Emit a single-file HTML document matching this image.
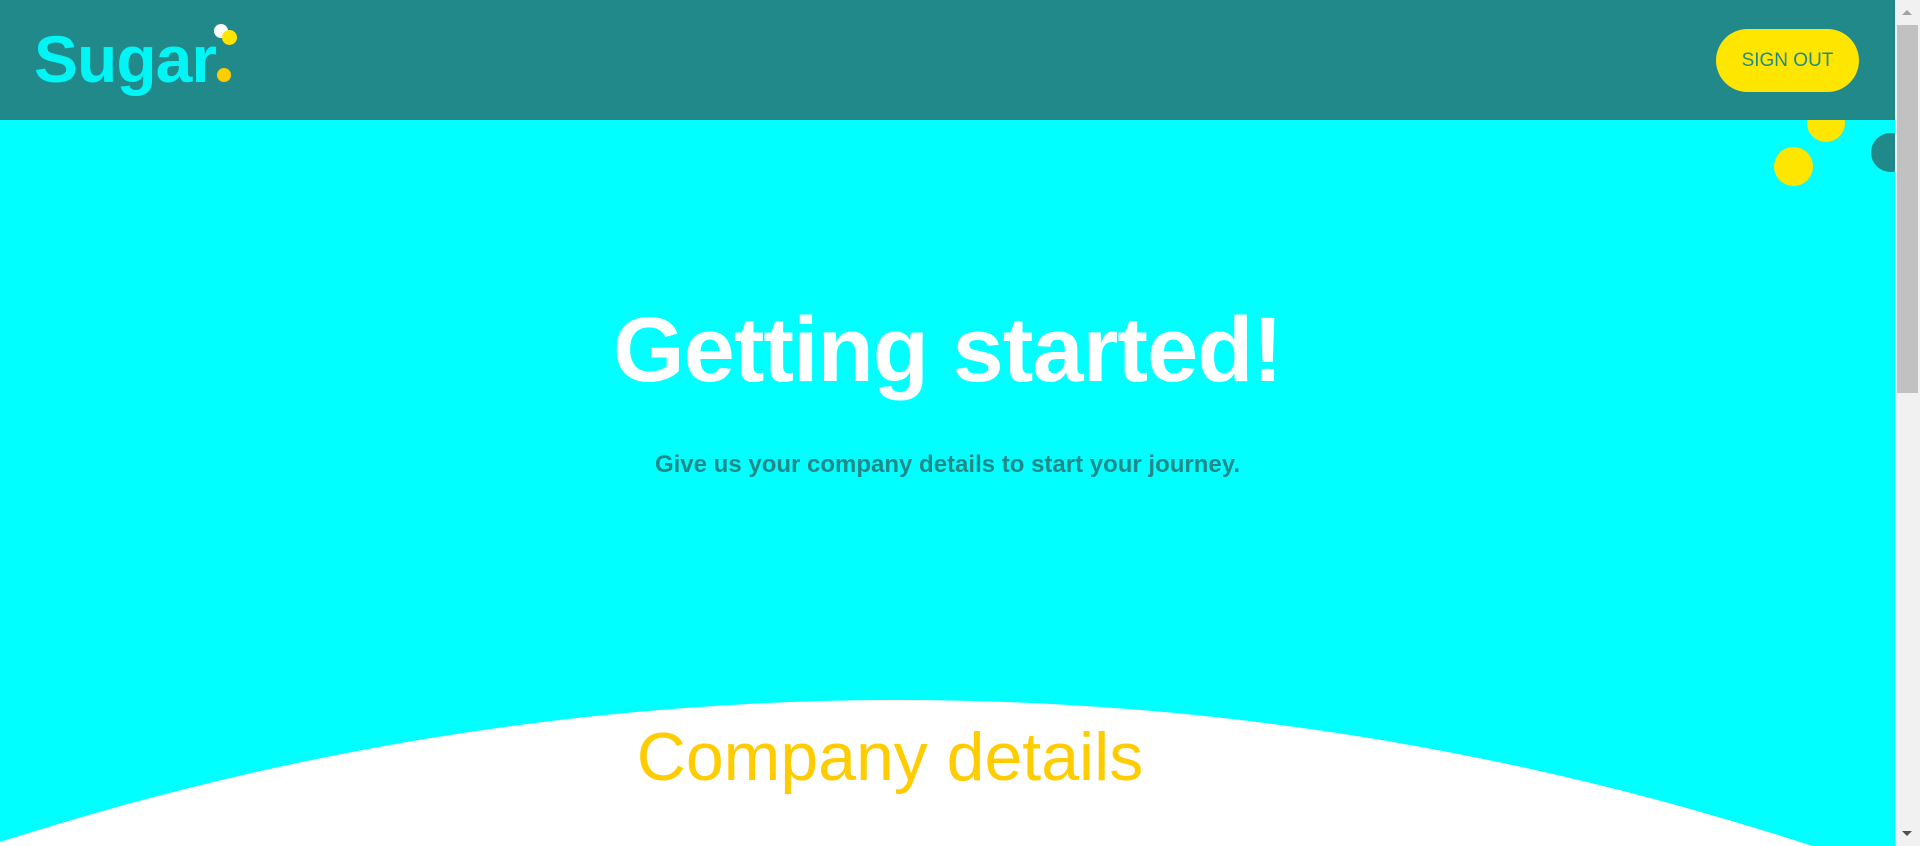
<!DOCTYPE html>
<html><head><meta charset="utf-8"><style>
html,body{margin:0;padding:0;width:1920px;height:846px;overflow:hidden;font-family:"Liberation Sans",sans-serif;}
.main{position:absolute;left:0;top:0;width:1895px;height:846px;background:#00ffff;overflow:hidden;}
.hdr{position:absolute;left:0;top:0;width:1895px;height:120px;background:#21898a;z-index:2;}
.logo{position:absolute;left:34px;top:26px;font-size:66px;font-weight:bold;color:#00f5f5;letter-spacing:-1px;line-height:1;}
.d{position:absolute;border-radius:50%;}
.btn{position:absolute;left:1716px;top:29px;width:143px;height:63px;border-radius:32px;background:#ffe600;color:#21898a;font-size:19px;text-align:center;line-height:63px;}
h1{position:absolute;left:0;width:1895px;top:300px;margin:0;text-align:center;color:#fff;font-size:92px;font-weight:bold;letter-spacing:-1px;line-height:1.1;}
.sub{position:absolute;left:0;width:1895px;top:451px;text-align:center;color:#21898a;font-size:24px;font-weight:bold;}
.arc{position:absolute;left:-2330px;top:700px;width:6460px;height:7170px;border-radius:50%;background:#fff;}
.cd{position:absolute;left:0;width:1780px;top:720px;text-align:center;color:#ffcc00;font-size:68px;line-height:1.1;}
.sb{position:absolute;left:1895px;top:0;width:25px;height:846px;background:#f1f1f1;}
</style></head><body>
<div class="main">
<div class="hdr">
<div class="logo">Sugar</div>
<div class="d" style="left:214px;top:24px;width:14px;height:14px;background:#fff"></div>
<div class="d" style="left:222px;top:30px;width:15px;height:15px;background:#ffe600"></div>
<div class="d" style="left:217px;top:68px;width:14px;height:14px;background:#ffcc00"></div>
<div class="btn">SIGN OUT</div>
</div>
<div class="d" style="left:1807px;top:104px;width:38px;height:38px;background:#ffe600"></div>
<div class="d" style="left:1774px;top:147px;width:39px;height:39px;background:#ffe600"></div>
<div class="d" style="left:1871px;top:133px;width:39px;height:39px;background:#21898a"></div>
<h1>Getting started!</h1>
<div class="sub">Give us your company details to start your journey.</div>
<div class="arc"></div>
<div class="cd">Company details</div>
</div>
<div class="sb">
<div style="position:absolute;left:2px;top:25px;width:21px;height:368px;background:#c1c1c1"></div>
<div style="position:absolute;left:7px;top:10px;border:5px solid transparent;border-bottom:5px solid #a3a3a3;border-top:0"></div>
<div style="position:absolute;left:7px;top:831px;border:5px solid transparent;border-top:5px solid #505050;border-bottom:0"></div>
</div>
</body></html>
